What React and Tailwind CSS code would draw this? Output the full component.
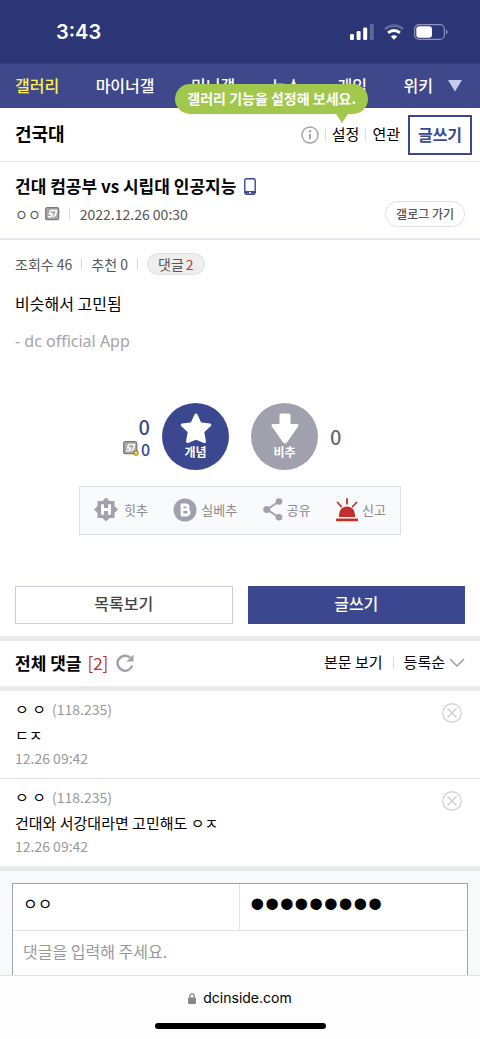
import React, { useState } from "react";

const menus = ["마이너갤", "미니갤", "뉴스", "게임"];

const comments = [
  { id: 1, name: "ㅇ ㅇ", ip: "(118.235)", text: "ㄷㅈ", date: "12.26 09:42" },
  {
    id: 2,
    name: "ㅇ ㅇ",
    ip: "(118.235)",
    text: "건대와 서강대라면 고민해도 ㅇㅈ",
    date: "12.26 09:42",
  },
];

const SignalIcon = () => (
  <svg width="24" height="16" viewBox="0 0 24 16" fill="#fff">
    <rect x="0" y="10" width="4" height="6" rx="1.3" />
    <rect x="6.6" y="7" width="4" height="9" rx="1.3" />
    <rect x="13.2" y="3.5" width="4" height="12.5" rx="1.3" />
    <rect x="19.8" y="0" width="4" height="16" rx="1.3" opacity=".25" />
  </svg>
);

const WifiIcon = () => (
  <svg width="20" height="16" viewBox="0 0 20 16" fill="none" stroke="#fff" strokeWidth="2.9">
    <path d="M1 5.2C6 .4 14 .4 19 5.2" opacity=".25" />
    <path d="M4.1 8.9c3.4-3.2 8.4-3.2 11.8 0" />
    <path d="M6.8 12.4c1.9-1.7 4.5-1.7 6.4 0L10 15.8z" fill="#fff" stroke="none" />
  </svg>
);

const BatteryIcon = () => (
  <svg width="34" height="16" viewBox="0 0 34 16" fill="none">
    <rect x=".6" y=".6" width="29.8" height="14.8" rx="4.5" stroke="#8f94b9" strokeWidth="1.2" />
    <rect x="2.3" y="2.3" width="15.7" height="11.4" rx="3" fill="#fff" />
    <path d="M32 5.5c2 .8 2 4.2 0 5z" fill="#8f94b9" />
  </svg>
);

const InfoIcon = () => (
  <svg width="18" height="18" viewBox="0 0 18 18" fill="none" stroke="#a0a1ad">
    <circle cx="9" cy="9" r="8" strokeWidth="1.4" />
    <path d="M9 8v5.3" strokeWidth="1.9" />
    <circle cx="9" cy="5.3" r="1.2" fill="#a0a1ad" stroke="none" />
  </svg>
);

const PhoneIcon = () => (
  <svg width="12" height="17" viewBox="0 0 12 17">
    <rect x=".8" y=".8" width="10.4" height="15.4" rx="1.6" fill="#fff" stroke="#3b4890" strokeWidth="1.4" />
    <path d="M.8 13h10.4v2.5H.8z" fill="#3b4890" />
    <rect x="5" y="14" width="2" height="1.2" fill="#fff" />
  </svg>
);

const NickIcon = ({ badge }) => (
  <svg width="16" height="15" viewBox="0 0 16 15">
    <rect x=".7" y=".7" width="13" height="12" rx="1.8" fill="#a9a9a9" stroke="#7b7b7b" strokeWidth="1.3" />
    <path d="M5.5 3.5h6L10.5 8l-2.5 2M3 9.8h3l1.5-2.3M5.5 3.8L4.500 7h3.8" fill="none" stroke="#fff" strokeWidth="1.5" />
    {badge && (
      <rect x="11" y="10" width="4" height="4" rx=".5" fill="#ffe02e" stroke="#8a7430" />
    )}
  </svg>
);

const StarIcon = () => (
  <svg width="32" height="31" viewBox="0 0 32 31" fill="#fff" stroke="#fff" strokeWidth="3" strokeLinejoin="round">
    <path d="M16 2l4 8.7 9.8 1.3-7.1 6.7 1.8 9.8L16 25l-8.5 3.5 1.8-9.8L2.2 12l9.8-1.3z" />
  </svg>
);

const DownIcon = () => (
  <svg width="28" height="31" viewBox="0 0 28 31" fill="#fff" stroke="#fff" strokeWidth="3" strokeLinejoin="round">
    <path d="M10 2h8v10.5h8L14.5 29h-1L2 12.5h8z" />
  </svg>
);

const HitIcon = () => (
  <svg width="24" height="25" viewBox="0 0 24 25">
    <path d="M12 .5l3.6 3.5h4.9v5l3.5 3.5-3.5 3.5v5h-4.9L12 24.5 8.4 21H3.5v-5L0 12.5 3.5 9V4h4.9z" fill="#a0a1ad" />
    <path d="M8.5 7.2v10.6M15.5 7.2v10.6M8.5 12.5h7" stroke="#fff" strokeWidth="2.8" />
  </svg>
);

const BestIcon = () => (
  <svg width="24" height="24" viewBox="0 0 24 24" fill="none">
    <circle cx="12" cy="12" r="11.5" fill="#a0a1ad" />
    <path
      d="M9 7h3.8a2.3 2.3 0 010 4.7H9h4.4a2.6 2.6 0 010 5.3H9z"
      stroke="#fff"
      strokeWidth="2.8"
      strokeLinejoin="round"
    />
  </svg>
);

const ShareIcon = () => (
  <svg width="20" height="23" viewBox="0 0 20 23" fill="#a0a1ad">
    <path d="M16 3.5l-12 8 12 8" fill="none" stroke="#a0a1ad" strokeWidth="1.9" />
    <circle cx="16" cy="3.5" r="3.3" />
    <circle cx="3.7" cy="11.5" r="3.5" />
    <circle cx="16" cy="19.3" r="3.3" />
  </svg>
);

const SirenIcon = () => (
  <svg width="22" height="24" viewBox="0 0 22 24" fill="#c3302b">
    <path d="M3 19v-2.5a8 8 0 0116 0V19z" />
    <rect x="0" y="20.5" width="22" height="2.8" rx=".8" />
    <path d="M11 1v4.7M1.5 4.5l3.8 4M20.5 4.5l-3.8 4" stroke="#c3302b" strokeWidth="1.8" strokeLinecap="round" />
  </svg>
);

const RefreshIcon = () => (
  <svg width="18" height="18" viewBox="0 0 18 18" fill="none">
    <path d="M16.2 11.5A7.5 7.5 0 1114 3.5" stroke="#a0a1ad" strokeWidth="2.4" />
    <path d="M17.5 .5v7h-7z" fill="#a0a1ad" />
  </svg>
);

const DeleteIcon = () => (
  <svg width="20" height="20" viewBox="0 0 20 20" fill="none" stroke="#d3d3d6">
    <circle cx="10" cy="10" r="9.2" strokeWidth="1.4" />
    <path d="M6 6l8 8M14 6l-8 8" strokeWidth="1.7" strokeLinecap="round" />
  </svg>
);

const LockIcon = () => (
  <svg width="8" height="11" viewBox="0 0 8 11" fill="#87878a">
    <rect y="4.5" width="8" height="6.5" rx="1.3" />
    <path d="M1.9 5V3a2.1 2.1 0 014.2 0v2" fill="none" stroke="#87878a" strokeWidth="1.2" />
  </svg>
);

const Divider = () => <span className="w-px h-3 bg-[#dadbe8]" />;

const App = () => {
  const [name, setName] = useState("ㅇㅇ");
  const [password, setPassword] = useState("123456789");
  const [memo, setMemo] = useState("");

  return (
    <div className="min-h-screen flex flex-col bg-white text-black font-['Noto_Sans_CJK_KR',sans-serif]">
      {/* phone status bar */}
      <div className="h-16 flex items-center justify-between pl-14 pr-8 bg-[#2c3576] border-b border-[#343e80] text-white">
        <span className="font-['Inter',sans-serif] text-xl font-semibold">3:43</span>
        <div className="flex items-center gap-2.5">
          <SignalIcon />
          <WifiIcon />
          <BatteryIcon />
        </div>
      </div>

      <nav className="h-11 flex items-center justify-between pl-[15px] pr-[17px] pb-0.5 bg-[#3e488b] text-white text-base font-medium">
        <a href="#gallery" className="text-[#fff04f]">
          갤러리
        </a>
        {menus.map((menu) => (
          <a key={menu} href="#menu">
            {menu}
          </a>
        ))}
        <div className="flex items-center gap-3.5">
          <a href="#wiki">위키</a>
          <button aria-label="더보기">
            <svg width="16" height="13" viewBox="0 0 16 13" fill="#c5caec">
              <path d="M1 1h14L8 12.5z" />
            </svg>
          </button>
        </div>
      </nav>

      <header className="relative flex items-center justify-between h-[54px] pl-[15px] pr-2 border-b border-[#e6e6ea]">
        <h1 className="pb-1 text-lg font-bold">건국대</h1>
        <div className="flex items-center gap-1.5 text-[15px]">
          <button aria-label="정보">
            <InfoIcon />
          </button>
          <Divider />
          <button>설정</button>
          <Divider />
          <button>연관</button>
          <button className="w-16 h-10 ml-0.5 pb-0.5 border-2 border-[#3b4890] text-[#3b4890] text-base font-bold">
            글쓰기
          </button>
        </div>
        {/* setting tooltip */}
        <div className="absolute -top-6 right-28 h-[30px] px-3 pb-0.5 flex items-center rounded-full bg-[#a1c84d] text-white text-sm font-bold whitespace-nowrap">
          갤러리 기능을 설정해 보세요.
          <svg className="absolute top-full right-5" width="12" height="9" viewBox="0 0 12 9" fill="#a1c84d">
            <path d="M0 0h12L6 9z" />
          </svg>
        </div>
      </header>

      <section className="h-[78px] px-[15px] pt-3 border-b-2 border-[#e8e9f1]">
        <h2 className="flex items-center gap-2 text-[17px] leading-6 font-bold">
          건대 컴공부 vs 시립대 인공지능
          <PhoneIcon />
        </h2>
        <div className="flex items-center justify-between mt-[3px] text-sm text-[#555]">
          <div className="flex items-center">
            <span>ㅇㅇ</span>
            <span className="ml-1 mr-2">
              <NickIcon />
            </span>
            <Divider />
            <span className="ml-2.5">2022.12.26 00:30</span>
          </div>
          <button className="h-[26px] px-2.5 border border-[#dedfed] rounded-full text-xs font-medium">
            갤로그 가기
          </button>
        </div>
      </section>

      <section className="px-[15px] pt-[13px]">
        <div className="flex items-center gap-[9px] text-sm text-[#555]">
          <span>조회수 46</span>
          <Divider />
          <span>추천 0</span>
          <Divider />
          <button className="h-[22px] px-2.5 flex items-center gap-0.5 border border-[#dedfed] rounded-full bg-[#eee]">
            댓글<span className="text-[#d0312d]">2</span>
          </button>
        </div>
        <p className="mt-4 text-base">비슷해서 고민됨</p>
        <p className="mt-3.5 text-base text-[#a5a5a5] font-['Noto_Sans',sans-serif]">- dc official App</p>

        {/* vote */}
        <div className="grid grid-cols-[1fr_auto_1fr] items-center gap-3 mt-[50px]">
          <div className="flex flex-col items-end text-[#3b4890] font-medium">
            <span className="text-xl leading-6">0</span>
            <span className="flex items-center text-base leading-5 gap-0.5">
              <NickIcon badge />0
            </span>
          </div>
          <div className="flex gap-[22px] text-white text-xs font-bold">
            <button className="size-[67px] rounded-full bg-[#3b4890] flex flex-col items-center pt-2.5">
              <StarIcon />
              개념
            </button>
            <button className="size-[67px] rounded-full bg-[#a0a1ad] flex flex-col items-center pt-2.5">
              <DownIcon />
              비추
            </button>
          </div>
          <span className="text-xl font-medium text-[#666a75]">0</span>
        </div>

        <div className="w-[322px] h-[49px] mx-auto mt-4 px-3.5 pb-0.5 flex items-center justify-between border border-[#dcdeed] bg-[#f9fafc] text-[13px] text-[#8b8b8b]">
          <button className="flex items-center gap-1.5">
            <HitIcon />
            힛추
          </button>
          <button className="flex items-center gap-1">
            <BestIcon />
            실베추
          </button>
          <button className="flex items-center gap-1">
            <ShareIcon />
            공유
          </button>
          <button className="flex items-center gap-1">
            <SirenIcon />
            신고
          </button>
        </div>

        <div className="grid grid-cols-2 gap-[15px] mt-[51px] mb-3 text-base font-medium">
          <button className="h-[38px] pb-1 border border-[#c9cadb] text-[#444]">목록보기</button>
          <button className="h-[38px] pb-1 bg-[#3b4890] text-white">글쓰기</button>
        </div>
      </section>

      <div className="h-[55px] px-[15px] pb-0.5 flex items-center justify-between border-y-[5px] border-[#e9eaee] text-[15px]">
        <div className="flex items-center gap-1.5 text-[17px]">
          <h3 className="font-bold">전체 댓글</h3>
          <span className="text-[#c3302b]">[2]</span>
          <button aria-label="새로고침" className="ml-0.5">
            <RefreshIcon />
          </button>
        </div>
        <div className="flex items-center gap-2.5">
          <button>본문 보기</button>
          <Divider />
          <button className="flex items-center gap-1">
            등록순
            <svg width="16" height="9" viewBox="0 0 16 9" fill="none" stroke="#a0a1ad" strokeWidth="1.6">
              <path d="M1 1l7 7 7-7" />
            </svg>
          </button>
        </div>
      </div>

      <ul className="divide-y divide-[#dfe0ea] border-b-[5px] border-[#e9eaee]">
        {comments.map((comment) => (
          <li key={comment.id} className="flex justify-between items-start pl-[15px] pr-[18px] pt-1.5 pb-2.5">
            <div className="text-[15px]">
              <p className="flex gap-1.5 leading-6">
                {comment.name}
                <span className="text-sm leading-6 text-[#999]">{comment.ip}</span>
              </p>
              <p className="leading-[27px]">{comment.text}</p>
              <p className="text-sm leading-5 text-[#999]">{comment.date}</p>
            </div>
            <button aria-label="삭제" className="mt-1.5">
              <DeleteIcon />
            </button>
          </li>
        ))}
      </ul>

      <form className="flex-1 flex flex-col px-3 pt-3 bg-[#f8f9fb]">
        <div className="flex-1 flex flex-col border border-b-0 border-[#a0a1ad] bg-white">
          <div className="flex border-b border-[#dfe0ea]">
            <input
              aria-label="닉네임"
              className="w-1/2 h-[46px] px-2.5 pb-2 border-r border-[#dfe0ea] text-base outline-none"
              value={name}
              onChange={(e) => setName(e.target.value)}
            />
            <input
              type="password"
              aria-label="비밀번호"
              className="w-1/2 h-[46px] px-2.5 pb-2 font-['Liberation_Sans',sans-serif] text-[42px] outline-none"
              value={password}
              onChange={(e) => setPassword(e.target.value)}
            />
          </div>
          <textarea
            rows={1}
            aria-label="댓글"
            className="block w-full flex-1 px-2.5 pt-2 text-base outline-none resize-none placeholder:text-[#999]"
            placeholder="댓글을 입력해 주세요."
            value={memo}
            onChange={(e) => setMemo(e.target.value)}
          />
        </div>
      </form>

      {/* browser address bar */}
      <footer className="h-16 flex flex-col items-center justify-between pt-3 pb-2.5 border-t border-[#e2e2e6] bg-[#fdfdfd]">
        <div className="flex items-center gap-[7px] font-['Inter',sans-serif] text-sm leading-5">
          <LockIcon />
          dcinside.com
        </div>
        <div className="w-[171px] h-1.5 rounded-full bg-black" />
      </footer>
    </div>
  );
};

export default App;
